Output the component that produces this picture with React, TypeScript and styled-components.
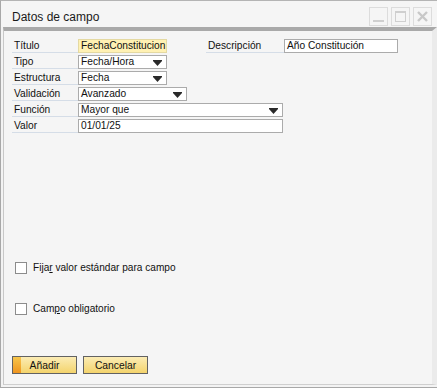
import React from "react";
import styled, { createGlobalStyle } from "styled-components";

const Global = createGlobalStyle`
  html, body { margin: 0; padding: 0; background: #f5f5f5; }
  body { font-family: "Liberation Sans", Arial, sans-serif; }
  * { box-sizing: border-box; }
`;

const Window = styled.div`
  width: 437px;
  height: 388px;
  display: flex;
  flex-direction: column;
  background: #f3f3f3;
  border-top: 1px solid #b4b4b4;
  border-left: 1px solid #a8a8a8;
  border-bottom: 1px solid #a8a8a8;
  padding-bottom: 2px;
`;

const TitleBar = styled.div`
  height: 26px;
  display: flex;
  align-items: center;
  justify-content: space-between;
  padding: 0 5px 0 11px;
  background: #f5f5f5;
`;

const Title = styled.div`
  font-size: 12px;
  color: #1a1a1a;
  padding-top: 5px;
`;

const Controls = styled.div`
  display: flex;
  gap: 3px;
  margin-top: 4px;
`;

const CtrlBtn = styled.div`
  width: 19px;
  height: 19px;
  border: 1px solid #dcdcdc;
  background: #f5f5f5;
  display: flex;
  align-items: center;
  justify-content: center;
`;

const Body = styled.div`
  flex: 1;
  margin-left: 2px;
  display: flex;
  flex-direction: column;
  background: #f5f5f5;
  border-top: 4px solid #a9a9a9;
  border-left: 1px solid #c8c8c8;
  border-right: 5px solid #ebebeb;
  border-bottom: 1px solid #cfcfcf;
  padding: 8px 0 10px 8px;
  font-size: 10.2px;
  color: #111;
`;

const Row = styled.div`
  display: flex;
  height: 14px;
  margin-bottom: 2px;
`;

const Label = styled.div<{ $w?: number; $ml?: number }>`
  width: ${(p) => p.$w ?? 66}px;
  margin-left: ${(p) => p.$ml ?? 0}px;
  padding-left: 2px;
  border-bottom: 1px solid #d5dde7;
  line-height: 13px;
  white-space: nowrap;
`;

const Field = styled.div<{ $w: number; $hl?: boolean }>`
  position: relative;
  width: ${(p) => p.$w}px;
  height: 14px;
  background: ${(p) => (p.$hl ? "#fff1b3" : "#ffffff")};
  border: 1px solid ${(p) => (p.$hl ? "#e4d9a2" : "#ababab")};
  padding-left: 2px;
  line-height: 12px;
  white-space: nowrap;
  overflow: hidden;
`;

const Arrow = styled.svg`
  position: absolute;
  right: 4px;
  top: 4px;
`;

const CheckRow = styled.label<{ $mt: number }>`
  display: flex;
  align-items: center;
  gap: 6px;
  margin-top: ${(p) => p.$mt}px;
  margin-left: 3px;
  height: 13px;
  font-size: 10.1px;
  color: #111;
`;

const Box = styled.span`
  width: 12px;
  height: 12px;
  border: 1px solid #8c8c8c;
  background: #ffffff;
  display: inline-block;
`;

const Footer = styled.div`
  margin-top: auto;
  display: flex;
  gap: 6px;
`;

const Button = styled.div<{ $primary?: boolean }>`
  position: relative;
  width: 65px;
  height: 18px;
  border: 1px solid #626262;
  background: linear-gradient(#fbecb4, #f4d46c);
  display: flex;
  align-items: center;
  justify-content: center;
  font-size: 10.3px;
  color: #111;
  overflow: hidden;
  ${(p) =>
    p.$primary &&
    `&::before {
      content: "";
      position: absolute;
      left: 0; top: 0; bottom: 0;
      width: 8px;
      background: linear-gradient(#f7c64c, #ef951f);
    }`}
`;

const BtnText = styled.span`
  position: relative;
`;

const Dropdown = ({ w, text }: { w: number; text: string }) => (
  <Field $w={w}>
    {text}
    <Arrow width="9" height="6" viewBox="0 0 9 6">
      <path d="M0 0H9V1L4.5 6L0 1Z" fill="#2a2a2a" />
    </Arrow>
  </Field>
);

export default function App() {
  return (
    <>
      <Global />
      <Window>
        <TitleBar>
          <Title>Datos de campo</Title>
          <Controls>
            <CtrlBtn>
              <svg width="13" height="13" viewBox="0 0 13 13">
                <rect x="1" y="10" width="11" height="2" fill="#cfcfcf" />
              </svg>
            </CtrlBtn>
            <CtrlBtn>
              <svg width="13" height="13" viewBox="0 0 13 13">
                <rect x="1.5" y="1.5" width="10" height="10" fill="none" stroke="#cfcfcf" strokeWidth="1" />
                <rect x="1" y="1" width="11" height="2" fill="#cfcfcf" />
              </svg>
            </CtrlBtn>
            <CtrlBtn>
              <svg width="13" height="13" viewBox="0 0 13 13">
                <path d="M2 2L11 11M11 2L2 11" stroke="#c8c8c8" strokeWidth="2.4" />
              </svg>
            </CtrlBtn>
          </Controls>
        </TitleBar>
        <Body>
          <Row>
            <Label>Título</Label>
            <Field $w={89} $hl>
              FechaConstitucion
            </Field>
            <Label $w={78} $ml={39}>
              Descripción
            </Label>
            <Field $w={114}>Año Constitución</Field>
          </Row>
          <Row>
            <Label>Tipo</Label>
            <Dropdown w={89} text="Fecha/Hora" />
          </Row>
          <Row>
            <Label>Estructura</Label>
            <Dropdown w={89} text="Fecha" />
          </Row>
          <Row>
            <Label>Validación</Label>
            <Dropdown w={109} text="Avanzado" />
          </Row>
          <Row>
            <Label>Función</Label>
            <Dropdown w={205} text="Mayor que" />
          </Row>
          <Row>
            <Label>Valor</Label>
            <Field $w={205}>01/01/25</Field>
          </Row>
          <CheckRow $mt={126}>
            <Box />
            <span>
              Fija<u>r</u> valor estándar para campo
            </span>
          </CheckRow>
          <CheckRow $mt={28}>
            <Box />
            <span>
              Cam<u>p</u>o obligatorio
            </span>
          </CheckRow>
          <Footer>
            <Button $primary>
              <BtnText>Añadir</BtnText>
            </Button>
            <Button>
              <BtnText>Cancelar</BtnText>
            </Button>
          </Footer>
        </Body>
      </Window>
    </>
  );
}
